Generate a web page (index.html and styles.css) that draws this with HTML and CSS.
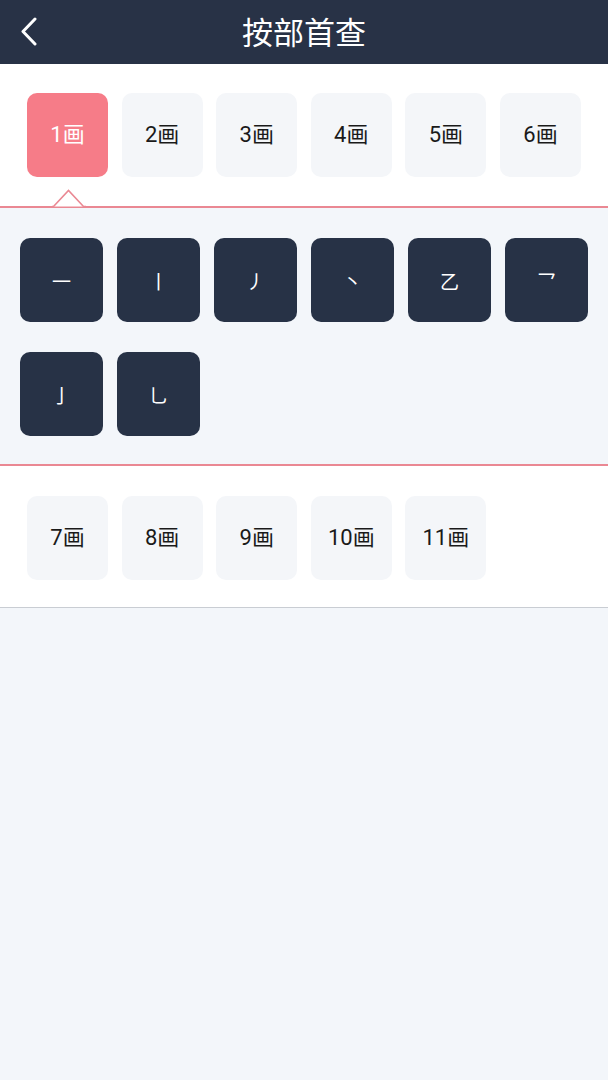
FILE: index.html
```html
<!DOCTYPE html>
<html lang="zh-CN">
<head>
<meta charset="utf-8">
<title>按部首查</title>
<link rel="stylesheet" href="styles.css">
</head>
<body>
<header class="topbar">
  <button class="back" aria-label="返回">
    <svg width="20" height="30" viewBox="0 0 20 30"><path d="M15 3 L3 15.5 L15 28" fill="none" stroke="#fff" stroke-width="3" stroke-linecap="round" stroke-linejoin="round"/></svg>
  </button>
  <h1 class="title">按部首查</h1>
</header>

<section class="strokes strokes-top">
  <div class="stroke-grid">
    <div class="stroke active">1画</div>
    <div class="stroke">2画</div>
    <div class="stroke">3画</div>
    <div class="stroke">4画</div>
    <div class="stroke">5画</div>
    <div class="stroke">6画</div>
  </div>
  <svg class="notch" width="34" height="19" viewBox="0 0 34 19"><path d="M0 17.5 L1.5 17.5 L16.5 1.5 L31.5 17.5 L34 17.5" fill="#fff" stroke="#ea8893" stroke-width="1.6"/></svg>
</section>

<section class="radicals">
  <div class="radical-grid">
    <div class="radical">一</div>
    <div class="radical">丨</div>
    <div class="radical">丿</div>
    <div class="radical">丶</div>
    <div class="radical">乙</div>
    <div class="radical">乛</div>
    <div class="radical">亅</div>
    <div class="radical">乚</div>
  </div>
</section>

<section class="strokes strokes-bottom">
  <div class="stroke-grid">
    <div class="stroke">7画</div>
    <div class="stroke">8画</div>
    <div class="stroke">9画</div>
    <div class="stroke">10画</div>
    <div class="stroke">11画</div>
  </div>
</section>
</body>
</html>
```

FILE: styles.css
```css
* { box-sizing: border-box; }

html, body {
  margin: 0;
  padding: 0;
  background: #f3f6fa;
  font-family: Roboto, "Noto Sans CJK SC", sans-serif;
}

.topbar {
  position: relative;
  height: 64px;
  background: #283246;
  display: flex;
  align-items: center;
  justify-content: center;
  padding-bottom: 3px;
}

.back {
  position: absolute;
  left: 20px;
  top: 16px;
  width: 20px;
  height: 30px;
  padding: 0;
  border: 0;
  background: none;
  display: block;
}
.back svg { display: block; }

.title {
  margin: 0;
  color: #fff;
  font-family: "Noto Sans CJK SC", sans-serif;
  font-weight: 400;
  font-size: 31px;
  line-height: 40px;
}

.strokes {
  background: #fff;
  position: relative;
}
.strokes-top {
  padding: 29px 27px 29px;
}
.strokes-bottom {
  padding: 30px 27px 27px;
  border-bottom: 1px solid #c9cdd3;
}

.stroke-grid {
  display: grid;
  grid-template-columns: repeat(6, 1fr);
  column-gap: 13.5px;
}

.stroke {
  height: 84px;
  border-radius: 10px;
  background: #f4f6f9;
  color: #1a1a1a;
  font-size: 22px;
  display: flex;
  align-items: center;
  justify-content: center;
  padding-bottom: 7px;
}
.stroke.active {
  background: #f67c88;
  color: #fff;
}

.notch {
  position: absolute;
  left: 52px;
  bottom: -2px;
  display: block;
}

.radicals {
  background: #f3f6fa;
  border-top: 2px solid #ea8893;
  border-bottom: 2px solid #ea8893;
  padding: 30px 20px 28px;
}

.radical-grid {
  display: grid;
  grid-template-columns: repeat(6, 1fr);
  column-gap: 14px;
  row-gap: 30px;
}

.radical {
  height: 84px;
  border-radius: 10px;
  background: #273246;
  color: #fff;
  font-family: "Noto Sans CJK SC", sans-serif;
  font-size: 19px;
  display: flex;
  align-items: center;
  justify-content: center;
}
```
